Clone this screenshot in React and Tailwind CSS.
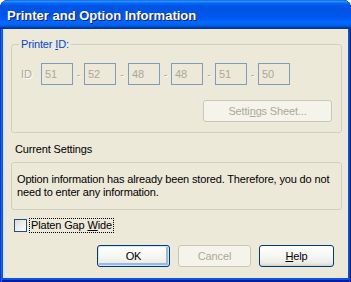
import React from 'react';

const font = "font-['Tahoma','Liberation_Sans',sans-serif]";

const IdBox = ({ value }) => (
  <div className="w-[32px] h-[22px] border border-[#7F9DB9] flex items-center pl-[3px] text-[#ACA899]">
    {value}
  </div>
);

const Dash = ({ wide }) => (
  <div className={`${wide ? 'w-[12px]' : 'w-[11px]'} h-[22px] flex items-center justify-center text-[#ACA899] [text-shadow:1px_1px_0_#fff]`}>
    -
  </div>
);

const XpButton = ({ children, width, isDefault, disabled }) => {
  if (disabled) {
    return (
      <div className={`${width} h-[22px] rounded-[3px] border border-[#C9C7BA] bg-[#F5F4EA] text-[#ACA899] flex items-center justify-center`}>
        {children}
      </div>
    );
  }
  return (
    <div className={`${width} h-[22px] rounded-[3px] border border-[#003C74] bg-[linear-gradient(to_bottom,#FFFFFF_0%,#F4F4F0_60%,#ECEBE6_85%,#D6D0C5_100%)] text-black flex items-center justify-center ${isDefault ? 'shadow-[inset_0_0_0_1px_#CEE7FF,inset_-1px_-1px_0_2px_#98B8EA]' : ''}`}>
      {children}
    </div>
  );
};

export default function App() {
  const ids = ['51', '52', '48', '48', '51', '50'];

  return (
    <div className={`w-[351px] h-[282px] bg-white ${font} text-[11px] leading-[13px] tracking-[-0.15px]`}>
      <div className="w-full h-full flex flex-col rounded-t-[8px] bg-[#0855DD] shadow-[inset_1px_0_0_#0831D9,inset_2px_0_0_#166AEE,inset_-1px_0_0_#001DA0,inset_-2px_0_0_#0046E0,inset_0_-2px_0_#001DA0] overflow-hidden">
        {/* title bar */}
        <div className="h-[29px] shrink-0 rounded-t-[8px] bg-[linear-gradient(to_bottom,#0058EE_0%,#3593FF_4%,#288EFF_6%,#127DFF_8%,#036FFC_10%,#0262EE_14%,#0057E5_20%,#0054E3_24%,#0055EB_56%,#005BF5_66%,#026AFE_76%,#0062EF_86%,#0052D6_92%,#0040AB_94%,#003092_100%)] flex items-center pl-[7px] pt-[1px]">
          <span className="text-white font-bold text-[13px] tracking-normal font-['Trebuchet_MS','Liberation_Sans',sans-serif] [text-shadow:1px_1px_0_#0A1883]">
            Printer and Option Information
          </span>
        </div>

        {/* body */}
        <div className="flex-1 mx-[3px] mb-[4px] bg-[#ECE9D8] pl-[8px] pr-[6px] pt-[9px] flex flex-col">
          <fieldset className="border border-[#D0D0BF] rounded-[3px] px-0 pb-[10px]">
            <legend className="ml-[7px] px-[2px] text-[#0046D5] leading-[13px]">
              Printer <span className="underline">I</span>D:
            </legend>
            <div className="flex items-center mt-[12px] pl-[9px]">
              <div className="w-[20px] text-[#ACA899] [text-shadow:1px_1px_0_#fff]">ID</div>
              {ids.map((v, i) => (
                <React.Fragment key={i}>
                  <IdBox value={v} />
                  {i < ids.length - 1 && <Dash wide={i % 2 === 1} />}
                </React.Fragment>
              ))}
            </div>
            <div className="flex justify-end mt-[15px] pr-[9px]">
              <XpButton width="w-[129px]" disabled>
                <span>
                  Setti<span className="underline">n</span>gs Sheet...
                </span>
              </XpButton>
            </div>
          </fieldset>

          <div className="mt-[10px] ml-[4px] text-black">Current Settings</div>

          <div className="mt-[6px] border border-[#D0D0BF] rounded-[3px] pl-[5px] pt-[10px] pb-[10px] text-black">
            Option information has already been stored. Therefore, you do not
            <br />
            need to enter any information.
          </div>

          <div className="mt-[8px] ml-[3px] flex items-center">
            <div className="w-[13px] h-[13px] border border-[#1C5180] bg-[linear-gradient(135deg,#DCDCD7_0%,#FFFFFF_100%)]" />
            <div className="ml-[2px] px-[1px] h-[15px] border border-dotted border-black flex items-center text-black whitespace-pre">
              Platen Gap <span className="underline">W</span>ide
            </div>
          </div>

          <div className="mt-[12px] flex justify-end gap-[8px] pr-[8px]">
            <XpButton width="w-[73px]" isDefault>OK</XpButton>
            <XpButton width="w-[73px]" disabled>Cancel</XpButton>
            <XpButton width="w-[75px]">
              <span>
                <span className="underline">H</span>elp
              </span>
            </XpButton>
          </div>
        </div>
      </div>
    </div>
  );
}
